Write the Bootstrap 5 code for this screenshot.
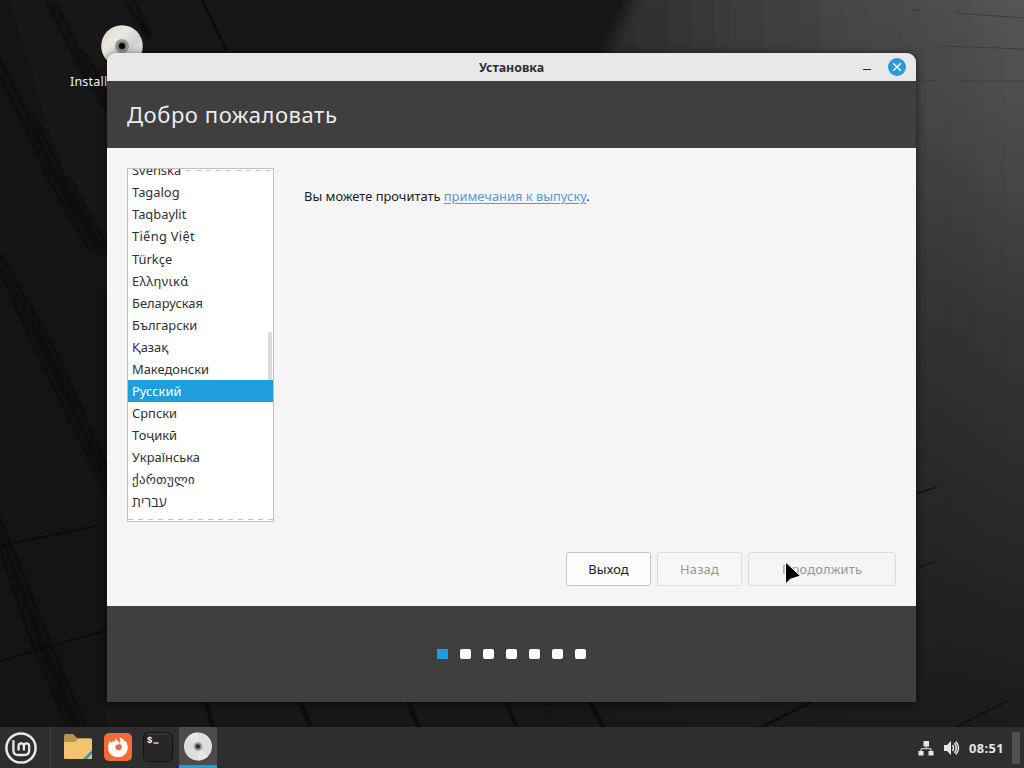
<!DOCTYPE html>
<html lang="ru">
<head>
<meta charset="utf-8">
<meta name="viewport" content="width=device-width, initial-scale=1">
<title>Установка</title>
<link href="https://cdn.jsdelivr.net/npm/bootstrap@5.3.0/dist/css/bootstrap.min.css" rel="stylesheet">
<style>
  body { font-family: "Noto Sans", "Open Sans", "DejaVu Sans", sans-serif; font-size: 12.9px; line-height: 1.4; background: #171717; color: #303030; }
  .desktop { width: 1024px; height: 768px; }
  .wallpaper { inset: 0; z-index: 0; }
  .launcher { left: 70px; top: 25px; color: #f0f0f0; z-index: 1; width: 104px; font-size: 12.5px; letter-spacing: .2px; }
  .launcher-label { margin-top: 6px; }
  .installer { width: 809px; height: 649px; margin: 53px 0 0 107px; border-radius: 9px 9px 0 0; z-index: 2; box-shadow: 0 1px 8px rgba(0,0,0,.6); }
  .titlebar { height: 28px; background: #e8e8e8; font-size: 12.4px; font-weight: 700; }
  .title-text { padding-top: 2px; }
  .window-tools { gap: 16px; padding-right: 10px; }
  .heading-bar { height: 67px; background: #3f3f3f; padding-left: 20px; }
  .heading-bar h1 { font-size: 22px; color: #ededed; font-weight: 400; letter-spacing: .56px; padding-bottom: 1px; }
  .page-body { height: 458px; background: #f5f5f5; padding: 20px; }
  .language-box { width: 147px; height: 354px; border: 1px solid #c0c0c0; background: #fff; }
  .languages { margin-top: -10px; }
  .languages .list-group-item { height: 22px; line-height: 22px; padding: 0 4px; margin: 0; border: 0; border-radius: 0; color: #303030; background: transparent; white-space: nowrap; }
  .languages .list-group-item.tall { height: 23px; }
  .languages .list-group-item.active { background: #1f9ede; color: #fff; margin: 0; }
  .languages .airy { letter-spacing: .3px; }
  .languages .hebrew { font-size: 14px; }
  .edge { left: 0; right: 0; height: 1px; background: repeating-linear-gradient(90deg, #c4c4c4 0 5px, #fff 5px 10px); }
  .edge-top { top: 1px; left: 58px; }
  .edge-bottom { bottom: 1px; }
  .thumb { right: 1px; top: 163px; width: 4px; height: 61px; border-radius: 2px; background: rgba(185,185,185,.5); }
  .thumb::after { content: ""; position: absolute; inset: 48px 0 0 0; background: rgba(31,158,222,.75); }
  .notes { padding: 19px 0 0 30px; color: #202020; }
  .notes a { color: #5b98dc; text-underline-offset: 2px; }
  .actions { gap: 6px; }
  .actions .btn { height: 34px; width: 85px; padding: 2px 0 0; font-size: 12.9px; letter-spacing: .15px; border: 1px solid #c5c5c5; border-radius: 3px; color: #202020; background: #fdfdfd; }
  .actions .btn:disabled { color: #969696; background: #f8f8f8; border-color: #dcdcdc; opacity: 1; }
  .actions .btn.wide { width: 148px; background: #f5f5f5; }
  .steps { height: 96px; background: #3f3f3f; gap: 12px; }
  .steps i { width: 11px; height: 10px; border-radius: 2px; background: #fff; }
  .steps i.current { background: #1f9ede; border-radius: 0; }
  .panel-bar { height: 41px; background: #2e2e2e; z-index: 3; color: #e6e6e6; }
  .menu-button { width: 51px; border-right: 1px solid #404040; }
  .tasks { gap: 10px; padding-left: 12px; }
  .task { width: 30px; }
  .task.running { width: 38px; margin-left: -4px; background: #4c4c4c; border-bottom: 3px solid #1f9ede; }
  .clock { font-weight: 700; font-size: 12.8px; letter-spacing: .4px; padding-top: 2px; }
  .show-desktop { width: 8px; height: 32px; background: #505050; }
  .pointer { left: 784px; top: 559px; z-index: 5; }
</style>
</head>
<body>
<div class="desktop position-relative overflow-hidden d-flex flex-column justify-content-between">
  <svg class="wallpaper position-absolute" width="1024" height="768" viewBox="0 0 1024 768" aria-hidden="true">
    <defs>
      <linearGradient id="slab" gradientUnits="userSpaceOnUse" x1="610" y1="0" x2="1024" y2="0"><stop offset="0" stop-color="#2c2c2c"/><stop offset=".3" stop-color="#3c3c3c"/><stop offset="1" stop-color="#555"/></linearGradient>
      <linearGradient id="fall" x1="0" y1="0" x2="0" y2="1"><stop offset="0" stop-color="#151515" stop-opacity="0"/><stop offset=".12" stop-color="#151515" stop-opacity=".1"/><stop offset=".45" stop-color="#151515" stop-opacity=".5"/><stop offset="1" stop-color="#151515" stop-opacity=".92"/></linearGradient>
      <filter id="soft" x="-20%" y="-10%" width="140%" height="120%"><feGaussianBlur stdDeviation="2.4"/></filter>
      <filter id="fine" x="-10%" y="-10%" width="120%" height="120%"><feGaussianBlur stdDeviation=".7"/></filter>
      <filter id="softer"><feGaussianBlur stdDeviation="7"/></filter>
    </defs>
    <rect width="1024" height="768" fill="#171717"/>
    <path d="M0 0V768H107V300L40 100L10 0Z" fill="#141414"/>
    <path d="M651 -40H1064V760H560V160L604 60Z" fill="url(#slab)" filter="url(#softer)"/>
    <rect x="540" width="484" height="740" fill="url(#fall)"/>
    <g fill="#080808" filter="url(#soft)">
      <path d="M46 0H54L79 52L86 56L109 100V114L76 60ZM-2 58L27 115L34 117L63 178L70 180L109 252L92 252L52 184L24 122L-2 72Z"/>
      <path d="M-2 252L54 350L109 474V498L60 398L36 348L-2 264ZM-2 514L46 636L86 730H70L32 640L-2 540Z"/>
      <path d="M126 0H132L152 38H148Z"/>
    </g>
    <g stroke="#080808" stroke-width="2.5" fill="none" filter="url(#fine)">
      <path d="M0 546L100 525M0 661L48 647L107 630" stroke-width="1.6"/>
      <path d="M202 0L226 50"/>
      <path d="M206 702L214 730M300 702L312 730M408 702L420 730M506 702L518 730M590 702L605 730" stroke-width="4"/>
      <path d="M755 730L812 702"/>
    </g>
    <g stroke="#121212" stroke-width="2" fill="none" filter="url(#fine)">
      <path d="M916 494L937 487M916 569L935 561M950 730L1010 700" stroke-width="1.6"/>
      <path d="M916 648L1024 612" stroke="#222" stroke-width="1"/>
    </g>
    <g stroke="#3c3c3c" fill="none"><path d="M912 10H920M955 13L1024 18M940 46L1024 49M916 81H936M960 81H1024"/></g>
  </svg>

  <div class="launcher position-absolute">
    <svg class="d-block mx-auto" width="42" height="42" viewBox="0 0 42 42"><defs><linearGradient id="disc" x1="0" y1="0" x2="1" y2="1"><stop offset="0" stop-color="#d2d2d2"/><stop offset=".35" stop-color="#eceade"/><stop offset=".6" stop-color="#d0d0d0"/><stop offset="1" stop-color="#f5f5f5"/></linearGradient></defs><circle cx="21" cy="21" r="20.8" fill="url(#disc)"/><circle cx="21" cy="21" r="5.8" fill="#747474" stroke="#999" stroke-width="2.5"/><circle cx="21" cy="21" r="3" fill="#050505"/></svg>
    <div class="launcher-label">Install</div>
  </div>

  <main class="installer position-relative overflow-hidden flex-shrink-0">
    <header class="titlebar d-flex align-items-center justify-content-center position-relative">
      <span class="title-text">Установка</span>
      <div class="window-tools position-absolute end-0 d-flex align-items-center">
        <svg width="9" height="18" viewBox="0 0 9 18"><path d="M0 11.5H8" stroke="#222" stroke-width="1.2"/></svg>
        <svg width="18" height="18" viewBox="0 0 18 18"><circle cx="9" cy="9" r="9" fill="#2b9bd8"/><path d="M5.2 5.2L12.8 12.8M12.8 5.2L5.2 12.8" stroke="#fff" stroke-width="1.4"/></svg>
      </div>
    </header>
    <div class="heading-bar d-flex align-items-center"><h1 class="mb-0">Добро пожаловать</h1></div>
    <section class="page-body d-flex flex-column justify-content-between">
      <div class="d-flex">
        <div class="language-box position-relative overflow-hidden flex-shrink-0">
          <div class="languages list-group list-group-flush">
            <div class="list-group-item">Svenska</div>
            <div class="list-group-item">Tagalog</div>
            <div class="list-group-item">Taqbaylit</div>
            <div class="list-group-item tall airy">Tiếng Việt</div>
            <div class="list-group-item">Türkçe</div>
            <div class="list-group-item airy">Ελληνικά</div>
            <div class="list-group-item">Беларуская</div>
            <div class="list-group-item">Български</div>
            <div class="list-group-item">Қазақ</div>
            <div class="list-group-item">Македонски</div>
            <div class="list-group-item active">Русский</div>
            <div class="list-group-item">Српски</div>
            <div class="list-group-item">Тоҷикӣ</div>
            <div class="list-group-item">Українська</div>
            <div class="list-group-item tall airy">ქართული</div>
            <div class="list-group-item hebrew">עברית</div>
          </div>
          <div class="edge edge-top position-absolute"></div>
          <div class="edge edge-bottom position-absolute"></div>
          <div class="thumb position-absolute"></div>
        </div>
        <p class="notes mb-0">Вы можете прочитать <a href="#">примечания к выпуску</a>.</p>
      </div>
      <div class="actions d-flex justify-content-end">
        <button class="btn">Выход</button>
        <button class="btn" disabled>Назад</button>
        <button class="btn wide" disabled>Продолжить</button>
      </div>
    </section>
    <footer class="steps d-flex align-items-center justify-content-center">
      <i class="current"></i><i></i><i></i><i></i><i></i><i></i><i></i>
    </footer>
  </main>

  <nav class="panel-bar d-flex align-items-stretch position-relative">
    <div class="menu-button d-flex align-items-center ps-1">
      <svg width="34" height="34" viewBox="0 0 34 34" fill="none" stroke="#e8e8e8"><circle cx="17" cy="17" r="14.6" stroke-width="2.5"/><path d="M9.4 9.2V19.2Q9.4 24 14.2 24H20.3Q25.2 24 25.2 19.2V15.2Q25.2 12.4 22.5 12.4Q19.9 12.4 19.9 15.2V19.5M19.9 15.2Q19.9 12.4 17.2 12.4Q14.6 12.4 14.6 15.2V19.5" stroke-width="2.3"/></svg>
    </div>
    <div class="tasks d-flex align-items-stretch">
      <div class="task d-flex align-items-center">
        <svg width="30" height="30" viewBox="0 0 30 30"><path d="M1 3Q1 1 3 1H10L14 5H27Q29 5 29 7V26H1Z" fill="#bd924c"/><path d="M1 9H12L15 6H29V24Q29 26 27 26H3Q1 26 1 24Z" fill="#f2c56d"/><path d="M20 26L29 17V21L24 26Z" fill="#3a96ba"/></svg>
      </div>
      <div class="task d-flex align-items-center">
        <svg width="30" height="30" viewBox="0 0 30 30"><rect x="1" y="0" width="28" height="28" rx="5" fill="#f46b38"/><path d="M6.4 8L8 9.7Q9.8 8 12 8.3L13 5.2L15 8.6Q17.8 9.4 16 11.4L13.5 11.8Q11.2 14.3 13.3 16.4Q15.6 18 18.2 16.3Q19.8 13.3 17.1 11Q18 7.5 16.4 4Q20.5 5.6 22 8.8L22.8 8Q25.4 12.4 24.8 16Q22.6 24 15 24.3Q7.1 23.9 5.3 17Q4.5 12 6.4 8Z" fill="#fff"/></svg>
      </div>
      <div class="task d-flex align-items-center">
        <svg width="30" height="32" viewBox="0 0 30 32"><rect x=".5" y=".5" width="29" height="29" rx="5" fill="#262626" stroke="#111"/><path d="M4 2H26" stroke="#444"/><text x="4" y="11" font-family="Liberation Mono, monospace" font-size="9" font-weight="700" fill="#fff">$</text><path d="M10.5 11H15.5" stroke="#fff" stroke-width="1.2"/></svg>
      </div>
      <div class="task running d-flex align-items-center justify-content-center">
        <svg width="30" height="30" viewBox="0 0 30 30"><circle cx="15" cy="15.5" r="14" fill="#dedede"/><path d="M15 15.5L5 5.5Q9 1.5 15 1.5ZM15 15.5L25 25.5Q20 29.5 15 29.5Z" fill="#e6e6e6"/><circle cx="15" cy="15.5" r="3.8" fill="#777" stroke="#aaa" stroke-width="1.5"/><circle cx="15" cy="15.5" r="2" fill="#292929"/></svg>
      </div>
    </div>
    <div class="ms-auto d-flex align-items-center">
      <svg class="me-2" width="18" height="18" viewBox="0 0 18 18"><path d="M6.5 2H12V7.5H6.5ZM1.5 12H6.5V16.5H1.5ZM11.5 12H16.5V16.5H11.5Z" fill="#e6e6e6"/><path d="M9.2 7V9.7M4 12.5V9.7H14V12.5" fill="none" stroke="#e6e6e6"/></svg>
      <svg class="me-2" width="18" height="16" viewBox="0 0 18 16"><path d="M1 5H4L8 1V15L4 11H1Z" fill="#e6e6e6"/><path d="M9.5 5Q11.5 8 9.5 11M11.5 3Q15 8 11.5 13M13 1.5Q18 8 13 14.5" fill="none" stroke="#e6e6e6" stroke-width="1.5"/></svg>
      <span class="clock">08:51</span>
      <span class="show-desktop ms-2 me-1"></span>
    </div>
  </nav>

  <svg class="pointer position-absolute" width="20" height="28" viewBox="0 0 20 28"><path d="M1.5 3V25L6.3 20.3L16.5 17Z" fill="#000" stroke="#fff" stroke-width="1"/></svg>
</div>
<script src="https://cdn.jsdelivr.net/npm/bootstrap@5.3.0/dist/js/bootstrap.bundle.min.js"></script>
</body>
</html>
